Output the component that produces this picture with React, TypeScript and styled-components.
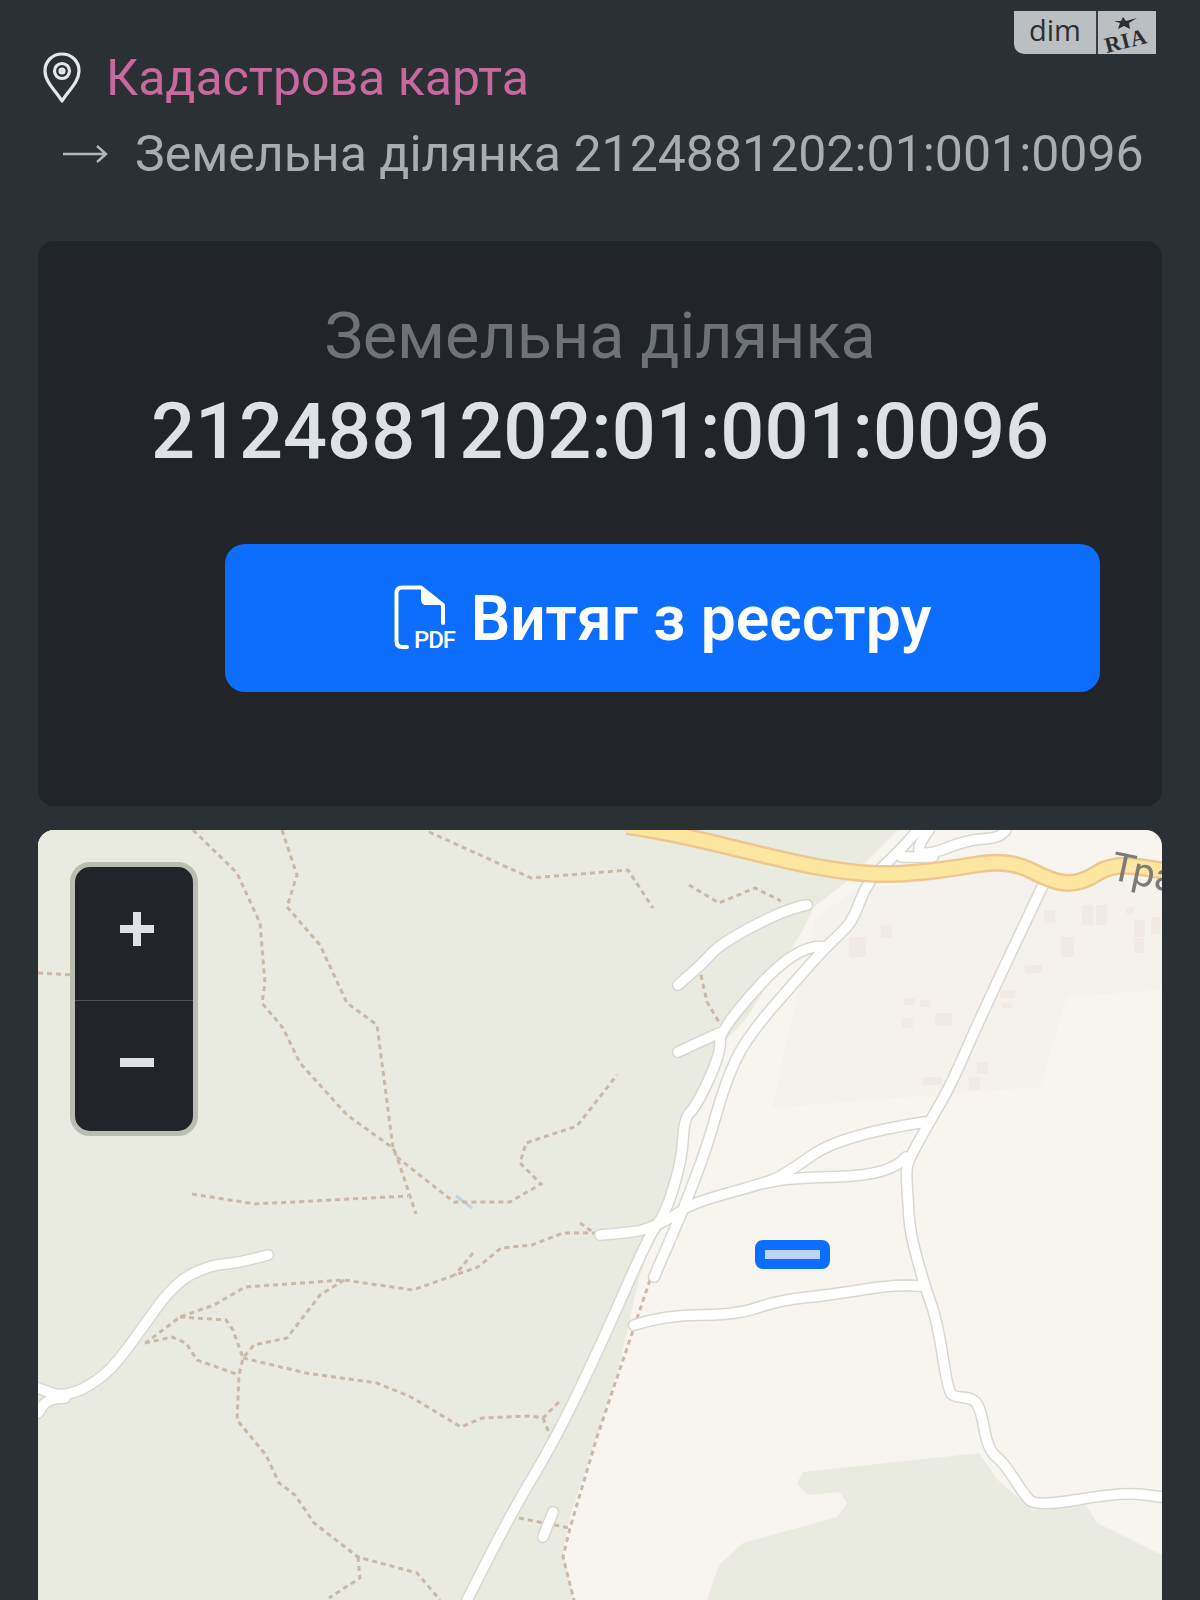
import { createGlobalStyle, styled } from "styled-components";

const roads = [
  "M807 905 788 908 721 943 703 963 678 985",
  "M918 830 898 853 868 880 853 920 841 933 826 947 799 977 747 1037 726 1080 707 1147 688 1197 680 1217 654 1277",
  "M826 947 799 942 719 1030 721 1053 696 1107 684 1118 682 1160 665 1215 650 1233 600 1347 555 1440 513 1510 467 1600",
  "M678 1052 719 1033",
  "M929 830 914 850 929 855 967 840 998 838 1006 830",
  "M902 857 933 857",
  "M1044 883 979 1020 952 1083 929 1123 910 1157 906 1170 908 1200 910 1233 925 1287 937 1320 948 1390 954 1397 973 1398 981 1410 988 1450 1004 1463 1023 1493 1036 1507 1122 1492 1162 1497",
  "M925 1122 841 1135 784 1175 765 1183 692 1203 673 1217 650 1228 634 1232 600 1235",
  "M906 1157 891 1175 791 1178 765 1183",
  "M634 1325 665 1315 736 1315 780 1300 830 1295 891 1285 921 1286",
  "M268 1255 239 1263 210 1265 174 1283 134 1340 105 1377 65 1398 38 1388",
  "M65 1398 48 1398 38 1413",
  "M553 1512 543 1537",
];

const highway = "M627 826 669 832 791 862 845 872 891 875 944 870 1009 859 1055 883 1082 883 1113 863 1166 871";

const trails = [
  "M193 830 237 873 260 923 265 983 262 1003 283 1028 300 1063 347 1115 393 1148 398 1158 454 1202 510 1202 541 1184 520 1163 526 1143 577 1126 617 1075",
  "M282 830 297 875 287 907 320 945 347 1003 377 1025 393 1148 398 1160 416 1214",
  "M38 973 73 975",
  "M192 1194 255 1204 408 1196",
  "M429 832 531 878 628 870 653 908",
  "M689 885 719 903 755 888 781 901",
  "M701 975 707 1002 719 1022",
  "M597 1233 563 1233 532 1245 501 1248 478 1267 455 1275 413 1290 344 1280 245 1287 214 1305 180 1317 147 1342",
  "M580 1223 597 1235",
  "M473 1253 455 1275",
  "M344 1280 320 1295 287 1338 254 1345 243 1358",
  "M180 1317 226 1320 233 1330 243 1358 239 1375 237 1420 266 1455 279 1483 295 1495 314 1523 358 1557 417 1573 440 1600",
  "M145 1343 172 1337 186 1343 197 1360 239 1375",
  "M243 1358 306 1373 377 1383 411 1397 461 1427 482 1418 530 1416 543 1418 559 1402",
  "M543 1418 551 1438",
  "M358 1557 360 1578 329 1598",
  "M519 1518 570 1528",
  "M650 1280 597 1437 570 1528 563 1557 574 1600",
];

const buildings = [
  [849, 937, 17, 20], [881, 925, 11, 13], [1044, 910, 11, 13], [1082, 905, 11, 20], [1096, 905, 11, 20],
  [1126, 907, 8, 7], [1134, 920, 11, 17], [1151, 917, 10, 17], [1134, 938, 10, 15], [1061, 937, 13, 20],
  [1025, 965, 17, 8], [1000, 990, 15, 8], [1002, 1003, 10, 5], [904, 998, 11, 7], [920, 1000, 10, 7],
  [935, 1013, 17, 13], [902, 1018, 11, 10], [977, 1062, 11, 12], [969, 1077, 11, 13], [923, 1077, 19, 8],
];

// rounds the corners of a "M x y x y ..." polyline so the roads don't look kinked
const smooth = (d: string) => {
  const n = d.slice(1).split(" ").map(Number);
  let out = `M${n[0]} ${n[1]}`;
  for (let i = 2; i + 3 < n.length; i += 2) {
    out += `Q${n[i]} ${n[i + 1]} ${(n[i] + n[i + 2]) / 2} ${(n[i + 1] + n[i + 3]) / 2}`;
  }
  return `${out}L${n[n.length - 2]} ${n[n.length - 1]}`;
};

const GlobalStyle = createGlobalStyle`
  html, body {
    margin: 0;
    background: #2b3035;
    font-family: Roboto, "Noto Sans", sans-serif;
  }
`;

const Page = styled.div`
  position: relative;
  width: 1200px;
  height: 1600px;
  overflow: hidden;
  padding: 0 38px;
  box-sizing: border-box;
  background: #2b3035;
`;

const Logo = styled.div`
  position: absolute;
  top: 11px;
  left: 1014px;
  display: flex;
  width: 142px;
  height: 43px;
  overflow: hidden;
  background: #bcbfc2;
  border-bottom-left-radius: 10px;
`;

const LogoDim = styled.span`
  width: 82px;
  border-right: 2px solid #3a3e42;
  text-align: center;
  font: 29px/38px "Open Sans", sans-serif;
  color: #2b2f33;
`;

const Crumbs = styled.nav`
  display: flex;
  flex-direction: column;
  height: 241px;
  padding-top: 52px;
  box-sizing: border-box;
`;

const CrumbRow = styled.div<{ $indent: number }>`
  display: flex;
  align-items: center;
  gap: ${(p) => (p.$indent > 10 ? 27 : 24)}px;
  padding-left: ${(p) => p.$indent}px;
  height: ${(p) => (p.$indent > 10 ? 50 : 52)}px;
  margin-bottom: 25px;
`;

const MapLink = styled.span`
  font-size: 50px;
  color: #c9689f;
  white-space: nowrap;
`;

const CrumbText = styled.span`
  font-size: 50px;
  color: #a9acb0;
  white-space: nowrap;
`;

const Card = styled.section`
  height: 565px;
  background: #212529;
  border-radius: 16px;
  padding-top: 57px;
  box-sizing: border-box;
`;

const CardLabel = styled.div`
  text-align: center;
  font-size: 64.7px;
  line-height: 76px;
  color: #6f7377;
`;

const CardNumber = styled.div`
  margin-top: 12px;
  text-align: center;
  font-size: 77.5px;
  font-weight: 500;
  line-height: 92px;
  color: #dee2e6;
`;

const PdfButton = styled.button`
  display: flex;
  align-items: center;
  justify-content: center;
  gap: 11px;
  width: 875px;
  height: 148px;
  margin: 66px 0 0 187px;
  border: 0;
  border-radius: 20px;
  background: #0d6efd;
  color: #fff;
  font-family: inherit;
  font-size: 62.3px;
  font-weight: 600;
`;

const MapBox = styled.section`
  position: relative;
  height: 770px;
  margin-top: 24px;
  border-radius: 16px 16px 0 0;
  overflow: hidden;
  background: #f8f5f1;
`;

const MapDrawing = styled.svg`
  display: block;
  filter: blur(0.5px);
`;

const ZoomControl = styled.div`
  position: absolute;
  top: 32px;
  left: 32px;
  display: flex;
  flex-direction: column;
  width: 118px;
  height: 264px;
  border: 5px solid #bbbdb1;
  border-radius: 20px;
  background: #212529;
  overflow: hidden;
`;

const ZoomButton = styled.div<{ $lift: number }>`
  flex: 1;
  display: flex;
  align-items: center;
  justify-content: center;
  padding: 0 0 ${(p) => p.$lift}px 6px;
  & + & {
    border-top: 1px solid #4d5054;
  }
`;

const PinIcon = () => (
  <svg width="40" height="52" viewBox="0 0 40 52" fill="none" stroke="#e6e7e9" strokeWidth="3.2">
    <path d="M20 49 C14 39 3 30 3 19 C3 9 10.5 2 20 2 C29.5 2 37 9 37 19 C37 30 26 39 20 49 Z" strokeLinejoin="round" />
    <circle cx="20" cy="19" r="7.5" />
    <circle cx="20" cy="19" r="2" />
  </svg>
);

const ArrowIcon = () => (
  <svg width="46" height="22" viewBox="0 0 46 22" fill="none" stroke="#b4b7ba" strokeWidth="2.4">
    <path d="M1 11H44M35 3 44 11 35 19" />
  </svg>
);

const PdfIcon = () => (
  <svg width="66" height="66" viewBox="0 0 66 66" fill="none" overflow="visible">
    <path
      d="M13 62H8C4.5 62 2.5 60 2.5 56V8C2.5 4.5 4.5 2.5 8 2.5H27L49 20V38"
      stroke="#fff"
      strokeWidth="4"
      strokeLinecap="round"
      strokeLinejoin="round"
    />
    <path d="M27 3 49 20H32C29 20 27 18 27 14Z" fill="#fff" />
    <text x="20" y="63" fontFamily="Roboto, sans-serif" fontWeight="500" fontSize="24" fill="#fff" textLength="42" lengthAdjust="spacing">
      PDF
    </text>
  </svg>
);

const RiaMark = () => (
  <svg width="58" height="43" viewBox="0 0 58 43">
    <path d="M25 6 28 10 39 7 31 12 32 18 26 15 20 18 22 12 16 10 23 10Z" fill="#2b2f33" />
    <text x="28" y="37" textAnchor="middle" transform="rotate(-14 28 30)" fontFamily="'Liberation Serif', serif" fontWeight="700" fontSize="22" letterSpacing="1" fill="#2b2f33">
      RIA
    </text>
  </svg>
);

const LandMap = () => (
  <MapDrawing width="1124" height="770" viewBox="38 830 1124 770">
    <path
      d="M38 830H898L845 883 814 907 803 930 784 960 745 1020 726 1040 684 1120 676 1170 657 1220 638 1283 619 1367 600 1427 570 1517 563 1550 574 1600H38Z"
      fill="#e9ebe0"
    />
    <path d="M868 880 1020 868 1162 880V990L1067 997 1040 1087 772 1108 814 920Z" fill="#f5f2ed" />
    <path
      d="M979 1453 998 1480 1032 1510 1086 1505 1097 1523 1162 1555V1600H707L719 1565 743 1543 837 1517 847 1503 839 1492 807 1495 797 1483 803 1472Z"
      fill="#e9ebe0"
    />
    {buildings.map(([x, y, w, h]) => (
      <rect key={`${x}-${y}`} x={x} y={y} width={w} height={h} fill="#f2eae4" />
    ))}
    <path d="M456 1196 472 1208" stroke="#bcd3e2" strokeWidth="3" fill="none" />
    {trails.map((d) => (
      <path key={d} d={d} fill="none" stroke="#cbb8a7" strokeWidth="3" strokeDasharray="5 4" />
    ))}
    {roads.map((d) => (
      <path key={d} d={smooth(d)} fill="none" stroke="#d8d7d2" strokeWidth="12.5" strokeLinecap="round" strokeLinejoin="round" />
    ))}
    {roads.map((d) => (
      <path key={d} d={smooth(d)} fill="none" stroke="#ffffff" strokeWidth="9.5" strokeLinecap="round" strokeLinejoin="round" />
    ))}
    <g fill="none" strokeLinejoin="round">
      <path d={smooth(highway)} stroke="#edc88e" strokeWidth="18" />
      <path d={smooth(highway)} stroke="#fde6a0" strokeWidth="13" />
    </g>
    <text x="1109" y="879" transform="rotate(12 1109 879)" fontFamily="Roboto, sans-serif" fontSize="40" fill="#7d7b78">
      Тра
    </text>
    <rect x="760" y="1245" width="65" height="19" rx="3" fill="#bcd4f6" stroke="#0d6efd" strokeWidth="10" />
  </MapDrawing>
);

const App = () => {
  return (
    <>
      <GlobalStyle />
      <Page>
        <Logo>
          <LogoDim>dim</LogoDim>
          <RiaMark />
        </Logo>
        <Crumbs>
          <CrumbRow $indent={4}>
            <PinIcon />
            <MapLink>Кадастрова карта</MapLink>
          </CrumbRow>
          <CrumbRow $indent={24}>
            <ArrowIcon />
            <CrumbText>Земельна ділянка 2124881202:01:001:0096</CrumbText>
          </CrumbRow>
        </Crumbs>
        <Card>
          <CardLabel>Земельна ділянка</CardLabel>
          <CardNumber>2124881202:01:001:0096</CardNumber>
          <PdfButton>
            <PdfIcon />
            Витяг з реєстру
          </PdfButton>
        </Card>
        <MapBox>
          <LandMap />
          <ZoomControl>
            <ZoomButton $lift={8}>
              <svg width="36" height="36" viewBox="0 0 36 36" fill="#dfe1e8">
                <path d="M14 1h8v13h13v8H22v13h-8V22H1v-8h13z" />
              </svg>
            </ZoomButton>
            <ZoomButton $lift={6}>
              <svg width="36" height="10" viewBox="0 0 36 10" fill="#dfe1e8">
                <rect x="1" width="34" height="9" />
              </svg>
            </ZoomButton>
          </ZoomControl>
        </MapBox>
      </Page>
    </>
  );
};

export default App;
